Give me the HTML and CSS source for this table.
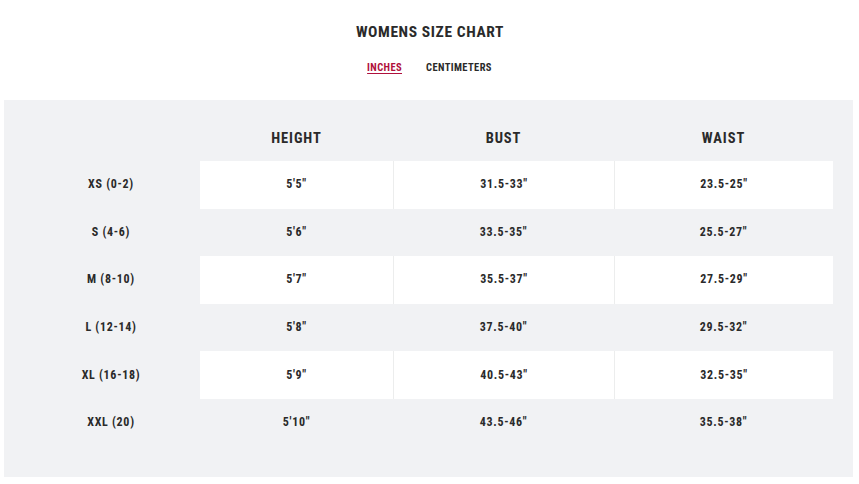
FILE: index.html
```html
<!DOCTYPE html>
<html lang="en">
<head>
<meta charset="utf-8">
<title>Womens Size Chart</title>
<link rel="stylesheet" href="styles.css">
</head>
<body>
<div class="page">
  <header class="top">
    <h1 class="title">WOMENS SIZE CHART</h1>
    <nav class="tabs">
      <span class="tab active">INCHES</span>
      <span class="tab">CENTIMETERS</span>
    </nav>
  </header>
  <section class="panel">
    <div class="chart">
      <div class="hcell"></div>
      <div class="hcell">HEIGHT</div>
      <div class="hcell">BUST</div>
      <div class="hcell">WAIST</div>

      <div class="label">XS (0-2)</div>
      <div class="cell white">5'5"</div>
      <div class="cell white sep">31.5-33"</div>
      <div class="cell white sep">23.5-25"</div>

      <div class="label">S (4-6)</div>
      <div class="cell">5'6"</div>
      <div class="cell">33.5-35"</div>
      <div class="cell">25.5-27"</div>

      <div class="label">M (8-10)</div>
      <div class="cell white">5'7"</div>
      <div class="cell white sep">35.5-37"</div>
      <div class="cell white sep">27.5-29"</div>

      <div class="label">L (12-14)</div>
      <div class="cell">5'8"</div>
      <div class="cell">37.5-40"</div>
      <div class="cell">29.5-32"</div>

      <div class="label">XL (16-18)</div>
      <div class="cell white">5'9"</div>
      <div class="cell white sep">40.5-43"</div>
      <div class="cell white sep">32.5-35"</div>

      <div class="label">XXL (20)</div>
      <div class="cell">5'10"</div>
      <div class="cell">43.5-46"</div>
      <div class="cell">35.5-38"</div>
    </div>
  </section>
</div>
</body>
</html>
```

FILE: styles.css
```css
* { box-sizing: border-box; }
html, body { margin: 0; padding: 0; background: #ffffff; }
body {
  font-family: "Roboto Condensed", "DejaVu Sans", sans-serif;
  font-weight: bold;
  color: #2a2a2a;
}
.page { width: 859px; height: 484px; }
.top {
  height: 100px;
  display: flex;
  flex-direction: column;
  align-items: center;
  padding-top: 23px;
}
.title {
  margin: 0;
  font-size: 15.5px;
  line-height: 18px;
  letter-spacing: 0.6px;
  font-weight: bold;
  padding-left: 1px;
}
.tabs {
  display: flex;
  gap: 24px;
  margin-top: 21px;
  font-size: 10.5px;
  line-height: 12px;
  letter-spacing: 0.4px;
}
.tab { color: #2a2a2a; }
.tab.active {
  color: #b0103c;
  text-decoration: underline;
  text-underline-offset: 2px;
  text-decoration-thickness: 1px;
}
.panel {
  margin: 0 6px 0 4px;
  height: 377px;
  background: #f1f2f4;
  padding: 0 20px 0 16px;
}
.chart {
  display: grid;
  grid-template-columns: 180px 193px 221px 219px;
  grid-template-rows: 61px repeat(6, 47.6px);
}
.hcell {
  display: flex;
  align-items: flex-end;
  justify-content: center;
  padding-bottom: 14px;
  font-size: 14.5px;
  line-height: 16px;
  letter-spacing: 0.9px;
}
.label, .cell {
  display: flex;
  align-items: center;
  justify-content: center;
  font-size: 12px;
  letter-spacing: 0.7px;
  padding-bottom: 1px;
}
.label { padding-left: 2px; }
.cell.white { background: #ffffff; }
.cell.sep { border-left: 1px solid #eceded; }
```
